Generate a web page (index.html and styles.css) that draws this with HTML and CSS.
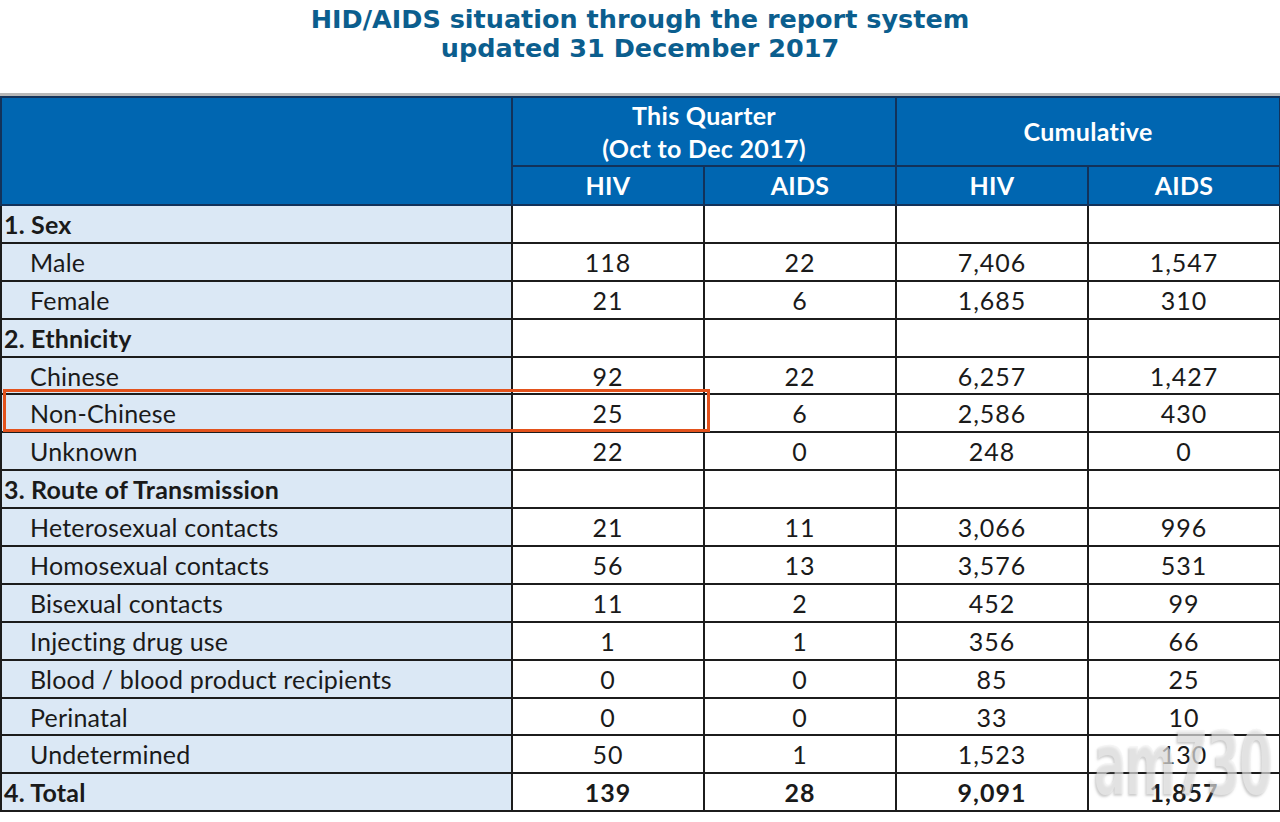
FILE: index.html
```html
<!DOCTYPE html>
<html lang="en">
<head>
<meta charset="utf-8">
<title>HID/AIDS situation</title>
<link rel="stylesheet" href="styles.css">
</head>
<body>
<div class="page">
  <h1 class="title">HID/AIDS situation through the report system<br>updated 31 December 2017</h1>
  <div class="table-wrap">
    <table class="stats">
      <colgroup>
        <col class="c-label"><col class="c-num"><col class="c-num"><col class="c-num"><col class="c-num">
      </colgroup>
      <thead>
        <tr class="h1">
          <th class="blank" rowspan="2"></th>
          <th colspan="2">This Quarter<br>(Oct to Dec 2017)</th>
          <th colspan="2">Cumulative</th>
        </tr>
        <tr class="h2">
          <th>HIV</th><th>AIDS</th><th>HIV</th><th>AIDS</th>
        </tr>
      </thead>
      <tbody>
        <tr class="sec"><td class="label">1. Sex</td><td></td><td></td><td></td><td></td></tr>
        <tr><td class="label sub">Male</td><td>118</td><td>22</td><td>7,406</td><td>1,547</td></tr>
        <tr><td class="label sub">Female</td><td>21</td><td>6</td><td>1,685</td><td>310</td></tr>
        <tr class="sec"><td class="label">2. Ethnicity</td><td></td><td></td><td></td><td></td></tr>
        <tr><td class="label sub">Chinese</td><td>92</td><td>22</td><td>6,257</td><td>1,427</td></tr>
        <tr><td class="label sub">Non-Chinese</td><td>25</td><td>6</td><td>2,586</td><td>430</td></tr>
        <tr><td class="label sub">Unknown</td><td>22</td><td>0</td><td>248</td><td>0</td></tr>
        <tr class="sec"><td class="label">3. Route of Transmission</td><td></td><td></td><td></td><td></td></tr>
        <tr><td class="label sub">Heterosexual contacts</td><td>21</td><td>11</td><td>3,066</td><td>996</td></tr>
        <tr><td class="label sub">Homosexual contacts</td><td>56</td><td>13</td><td>3,576</td><td>531</td></tr>
        <tr><td class="label sub">Bisexual contacts</td><td>11</td><td>2</td><td>452</td><td>99</td></tr>
        <tr><td class="label sub">Injecting drug use</td><td>1</td><td>1</td><td>356</td><td>66</td></tr>
        <tr><td class="label sub">Blood / blood product recipients</td><td>0</td><td>0</td><td>85</td><td>25</td></tr>
        <tr><td class="label sub">Perinatal</td><td>0</td><td>0</td><td>33</td><td>10</td></tr>
        <tr><td class="label sub">Undetermined</td><td>50</td><td>1</td><td>1,523</td><td>130</td></tr>
        <tr class="total"><td class="label">4. Total</td><td>139</td><td>28</td><td>9,091</td><td>1,857</td></tr>
      </tbody>
    </table>
    <div class="highlight"></div>
  </div>
  <div class="watermark">am730</div>
</div>
</body>
</html>
```
FILE: styles.css
```css
html, body {
  margin: 0;
  padding: 0;
  background: #ffffff;
}
.page {
  position: relative;
  width: 1280px;
  height: 822px;
  overflow: hidden;
}
.title {
  margin: 0;
  padding-top: 5px;
  height: 93px;
  box-sizing: border-box;
  text-align: center;
  font-family: "DejaVu Sans", Verdana, sans-serif;
  font-weight: bold;
  font-size: 25.5px;
  line-height: 29px;
  color: #0b5e8e;
}
.table-wrap {
  position: relative;
  border-top: 3px solid #b8b8b8;
}
.stats {
  width: 1280px;
  table-layout: fixed;
  border-collapse: collapse;
  font-family: Lato, "Open Sans", sans-serif;
  font-size: 25px;
  color: #1a1a1a;
}
.c-label { width: 511px; }
.c-num { width: 192px; }
.stats th, .stats td {
  border: 2px solid #1c1c1c;
  padding: 0;
  text-align: center;
}
.stats th {
  background: #0066b1;
  color: #ffffff;
  font-weight: bold;
  border-color: #12325a;
  line-height: 33px;
  letter-spacing: 0.3px;
}
.h1 th { height: 67px; }
.h2 th { height: 37px; }
.stats td {
  height: 35.9px;
  line-height: 30px;
  background: #ffffff;
  letter-spacing: 1px;
}
.stats td.label {
  text-align: left;
  background: #dbe8f5;
  padding-left: 2px;
  letter-spacing: 0.2px;
}
.stats td.sub { padding-left: 28px; }
.sec td.label, .total td { font-weight: bold; }
.highlight {
  position: absolute;
  left: 3px;
  top: 293px;
  width: 701px;
  height: 37px;
  border: 3px solid #e3521c;
}
.watermark {
  position: absolute;
  left: 1094px;
  top: 720px;
  font-family: "DejaVu Sans Condensed", "DejaVu Sans", sans-serif;
  font-weight: bold;
  font-size: 88px;
  line-height: 1;
  letter-spacing: -3px;
  transform: scaleX(0.62);
  transform-origin: left top;
  color: rgba(240, 240, 240, 0.6);
  text-shadow: -2px 2px 3px rgba(110, 110, 110, 0.35);
}
```
